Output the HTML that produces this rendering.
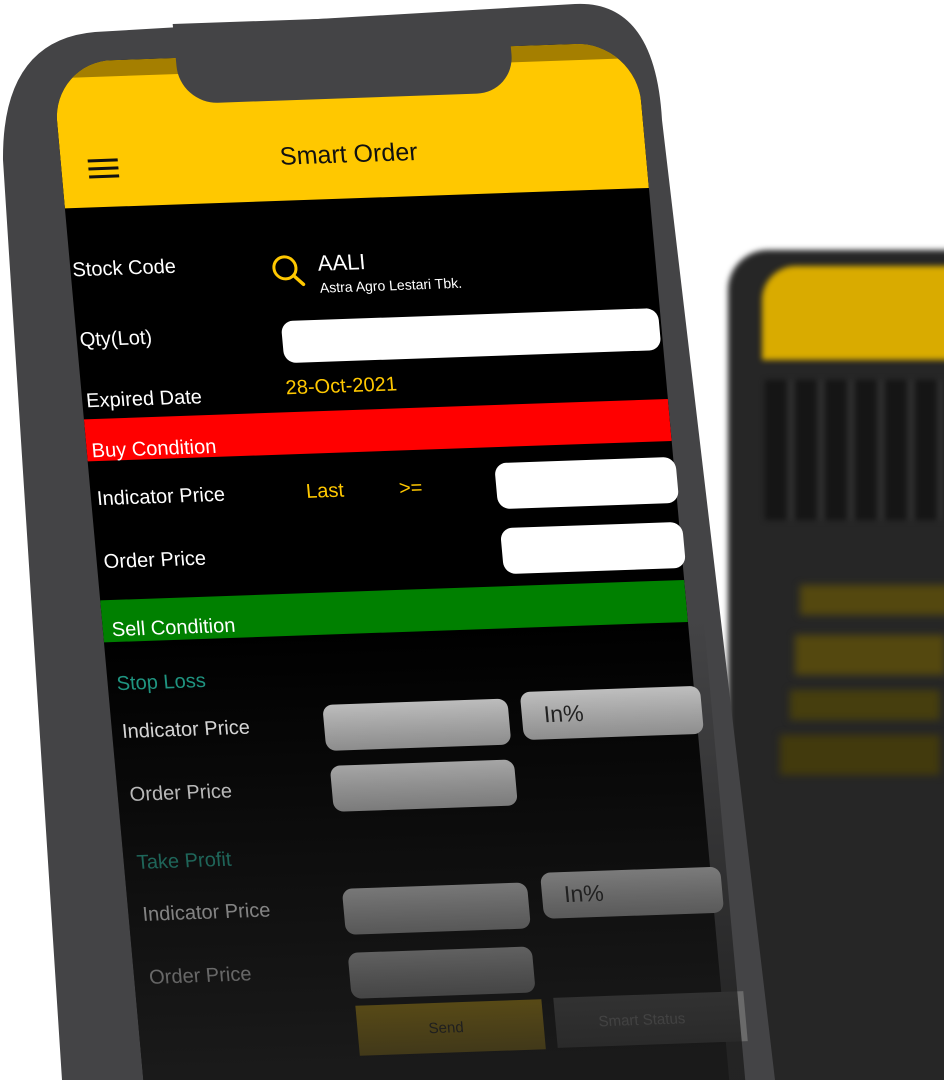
<!DOCTYPE html>
<html><head><meta charset="utf-8"><style>
html,body{margin:0;padding:0;background:#fff;width:944px;height:1080px;overflow:hidden;font-family:"Liberation Sans",sans-serif}
#wrap{position:relative;width:944px;height:1080px;overflow:hidden}
.abs{position:absolute}
#bg2{position:absolute;left:728px;top:250px;width:260px;height:900px;background:#262626;border-radius:40px;filter:blur(3px)}
#s{position:absolute;left:0;top:0;width:700px;height:1300px;transform-origin:0 0;transform:matrix(1,-0.035,0.09,1,0,0)}
.t{position:absolute;white-space:nowrap;color:#fff;font-size:20px;line-height:22px}
.in{position:absolute;background:#fff;border-radius:12px}
.g{position:absolute;background:linear-gradient(#d8d8d8,#b0b0b0);border-radius:10px}
</style></head><body><div id="wrap">
<div id="bg2"></div>
<div class="abs" style="left:762px;top:266px;width:200px;height:94px;background:#d9ab00;border-radius:34px 0 0 0;filter:blur(3px)"></div>
<div class="abs" style="left:765px;top:380px;width:190px;height:140px;background:repeating-linear-gradient(90deg,#151515 0 22px,#2e2e2e 22px 30px);filter:blur(3px)"></div>
<div class="abs" style="left:800px;top:585px;width:150px;height:30px;background:#54480f;filter:blur(4px)"></div>
<div class="abs" style="left:795px;top:635px;width:150px;height:40px;background:#54480f;filter:blur(4px)"></div>
<div class="abs" style="left:790px;top:690px;width:150px;height:30px;background:#463e0e;filter:blur(4px)"></div>
<div class="abs" style="left:780px;top:735px;width:160px;height:40px;background:#423a0d;filter:blur(4px)"></div>
<svg class="abs" style="left:0;top:0" width="944" height="1080">
<path d="M3,160 Q2,40 95,32 L575,4 Q655,0 662,120 L775,1080 L62,1080 Z" fill="#444446"/>
</svg>
<div id="s">
 <div class="abs" style="left:46px;top:64px;width:584px;height:1250px;background:#000;border-radius:60px 60px 0 0;overflow:hidden">
  <div class="abs" style="left:0;top:0;width:584px;height:146px;background:#ffc800"></div>
  <div class="abs" style="left:0;top:0;width:584px;height:16px;background:#a57f00"></div>
  <div class="abs" style="left:0;top:357px;width:584px;height:42px;background:#ff0000"></div>
  <div class="abs" style="left:0;top:538px;width:584px;height:42px;background:#008000"></div>
 </div>
 <div class="abs" style="left:170px;top:30px;width:335px;height:80px;background:#444446;border-radius:0 0 38px 38px"></div>
 <div class="abs" style="left:73px;top:162px;width:30px;height:3px;background:#111;box-shadow:0 8px 0 #111,0 16px 0 #111"></div>
 <div class="t" style="left:265px;top:155px;font-size:25px;color:#111">Smart Order</div>
 <div class="t" style="left:48px;top:261px">Stock Code</div>
 <svg class="abs" style="left:244px;top:262px" width="40" height="40"><circle cx="16" cy="15" r="11" fill="none" stroke="#ffc800" stroke-width="3"/><line x1="24" y1="23" x2="33" y2="32" stroke="#ffc800" stroke-width="3.5" stroke-linecap="round"/></svg>
 <div class="t" style="left:293px;top:263px;font-size:22px">AALI</div>
 <div class="t" style="left:293px;top:287px;font-size:14px">Astra Agro Lestari Tbk.</div>
 <div class="t" style="left:49px;top:331px">Qty(Lot)</div>
 <div class="in" style="left:251px;top:330px;width:377px;height:42px"></div>
 <div class="t" style="left:50px;top:392px">Expired Date</div>
 <div class="t" style="left:250px;top:386px;color:#ffc800">28-Oct-2021</div>
 <div class="t" style="left:51px;top:442px">Buy Condition</div>
 <div class="t" style="left:52px;top:490px">Indicator Price</div>
 <div class="t" style="left:261px;top:490px;color:#ffc800">Last</div>
 <div class="t" style="left:354px;top:490px;color:#ffc800">&gt;=</div>
 <div class="in" style="left:451px;top:479px;width:181px;height:46px"></div>
 <div class="t" style="left:53px;top:553px">Order Price</div>
 <div class="in" style="left:451px;top:544px;width:182px;height:46px"></div>
 <div class="t" style="left:55px;top:621px">Sell Condition</div>
 <div class="t" style="left:55px;top:675px;color:#1fa08a">Stop Loss</div>
 <div class="t" style="left:56px;top:723px">Indicator Price</div>
 <div class="g" style="left:258px;top:714px;width:185px;height:46px"></div>
 <div class="g" style="left:456px;top:708px;width:180px;height:48px"></div>
 <div class="t" style="left:478px;top:720px;font-size:23px;color:#222">In%</div>
 <div class="t" style="left:58px;top:786px">Order Price</div>
 <div class="g" style="left:260px;top:775px;width:184px;height:46px"></div>
 <div class="t" style="left:59px;top:854px;color:#1fa08a">Take Profit</div>
 <div class="t" style="left:60px;top:906px">Indicator Price</div>
 <div class="g" style="left:261px;top:898px;width:185px;height:46px"></div>
 <div class="g" style="left:460px;top:889px;width:180px;height:46px"></div>
 <div class="t" style="left:482px;top:900px;font-size:23px;color:#222">In%</div>
 <div class="t" style="left:61px;top:969px">Order Price</div>
 <div class="g" style="left:261px;top:962px;width:184px;height:46px"></div>
 <div class="abs" style="left:264px;top:1015px;width:186px;height:50px;background:#ffc800"></div>
 <div class="t" style="left:335px;top:1030px;font-size:15px;color:#222">Send</div>
 <div class="abs" style="left:462px;top:1014px;width:190px;height:50px;background:#6a6a6a"></div>
 <div class="t" style="left:505px;top:1029px;font-size:15px;color:#ccc">Smart Status</div>
 <div class="abs" style="left:46px;top:640px;width:600px;height:660px;background:linear-gradient(rgba(30,30,30,0),rgba(30,30,30,0.4) 30%,rgba(30,30,30,0.85) 65%,rgba(30,30,30,0.9) 100%)"></div>
</div>
</div></body></html>
